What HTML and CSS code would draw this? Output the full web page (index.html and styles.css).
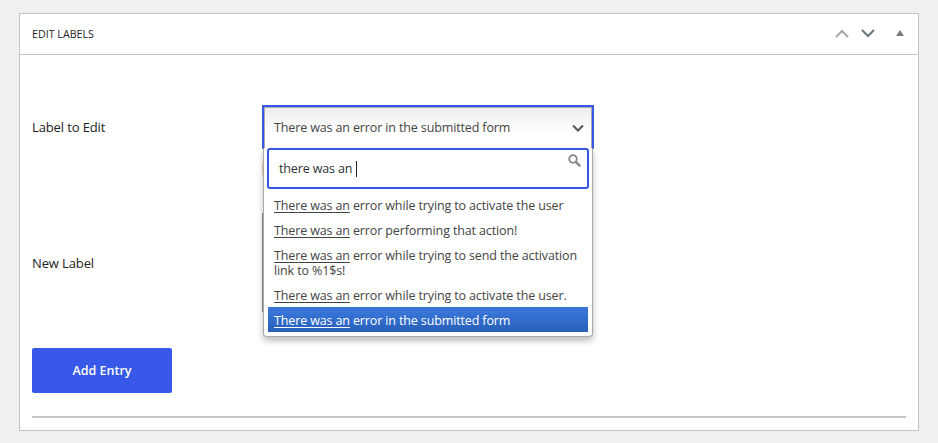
FILE: index.html
```html
<!DOCTYPE html>
<html lang="en">
<head>
<meta charset="utf-8">
<title>Edit Labels</title>
<link rel="stylesheet" href="styles.css">
</head>
<body>
<section class="card">
  <header class="card-head">
    <h2 class="card-title">EDIT LABELS</h2>
    <div class="card-actions">
      <svg class="ico up" width="14" height="9" viewBox="0 0 14 9"><path d="M1 8 7 2l6 6" fill="none" stroke="currentColor" stroke-width="2"/></svg>
      <svg class="ico down" width="14" height="9" viewBox="0 0 14 9"><path d="M1 1l6 6 6-6" fill="none" stroke="currentColor" stroke-width="2"/></svg>
      <svg class="ico tri" width="8" height="6" viewBox="0 0 8 6"><path d="M4 0 8 6H0z" fill="currentColor"/></svg>
    </div>
  </header>
  <div class="card-body">
    <div class="row row-select">
      <div class="label">Label to Edit</div>
      <div class="control">
        <div class="select">
          <div class="select-inner">
            <span>There was an error in the submitted form</span>
            <svg class="chev" width="12" height="8" viewBox="0 0 12 8"><path d="M1 1.5 6 6.5l5-5" fill="none" stroke="currentColor" stroke-width="2"/></svg>
          </div>
        </div>
        <span class="tick"></span>
        <div class="drop">
          <div class="search">
            <span class="typed">there was an</span><span class="caret"></span>
            <svg class="mag" width="13" height="13" viewBox="0 0 13 13"><circle cx="5" cy="5" r="3.8" fill="none" stroke="currentColor" stroke-width="1.8"/><path d="m7.8 7.8 4.4 4.4" stroke="currentColor" stroke-width="2.4"/></svg>
          </div>
          <ul class="results">
            <li><u>There was an</u> error while trying to activate the user</li>
            <li><u>There was an</u> error performing that action!</li>
            <li><u>There was an</u> error while trying to send the activation link to %1$s!</li>
            <li><u>There was an</u> error while trying to activate the user.</li>
            <li class="active"><u>There was an</u> error in the submitted form</li>
          </ul>
        </div>
      </div>
    </div>
    <div class="row row-text">
      <div class="label">New Label</div>
      <div class="box"></div>
    </div>
    <button class="add" type="button">Add Entry</button>
    <hr class="rule">
  </div>
</section>
</body>
</html>
```
FILE: styles.css
```css
html, body { margin: 0; padding: 0; }
body {
  background: #f0f0f1;
  padding: 13px 19px 12px;
  font-family: "Open Sans", "Noto Sans", sans-serif;
  font-size: 12.5px;
  letter-spacing: -0.13px;
  color: #2c3338;
  height: 443px;
  box-sizing: border-box;
  overflow: hidden;
}
.card {
  width: 900px;
  height: 418px;
  box-sizing: border-box;
  background: #fff;
  border: 1px solid #c3c4c7;
}
.card-head {
  height: 41px;
  box-sizing: border-box;
  border-bottom: 1px solid #c3c4c7;
  display: flex;
  align-items: center;
  justify-content: space-between;
  padding: 0 14px 0 12px;
}
.card-title { margin: 0; font-size: 10.7px; font-weight: 400; letter-spacing: 0; color: #1d2327; }
.card-actions { display: flex; align-items: center; gap: 12px; margin-top: -2px; }
.ico.up { color: #a7aaad; }
.ico.down { color: #6a7478; }
.ico.tri { color: #787c82; margin-left: 9px; margin-top: -1px; }
.card-body { padding: 50px 12px 0; }
.row { display: grid; grid-template-columns: 230px 332px; }
.label { color: #1d2327; font-size: 13px; letter-spacing: -0.12px; }
.row-select { height: 108px; }
.row-select .label { padding-top: 13px; }
.control { position: relative; }
.select {
  height: 44px;
  box-sizing: border-box;
  border: 2px solid #3858e9;
  border-bottom: 0;
}
.select-inner {
  height: 100%;
  box-sizing: border-box;
  border: 1px solid #aaa;
  border-bottom: 0;
  background: linear-gradient(#eeeeee, #ffffff 60%);
  display: flex;
  align-items: center;
  justify-content: space-between;
  padding: 0 7px 2px 9px;
  color: #444;
}
.chev { color: #50575e; }
.tick {
  position: absolute;
  left: 0;
  top: 58px;
  width: 2px;
  height: 12px;
  background: #f3cfa8;
}
.drop {
  position: absolute;
  z-index: 2;
  left: 1px;
  top: 43px;
  width: 330px;
  box-sizing: border-box;
  background: #fff;
  border: 1px solid #aaa;
  border-top: 0;
  border-radius: 0 0 4px 4px;
  box-shadow: 0 4px 6px rgba(0, 0, 0, .25);
  padding: 0 3px 4px;
}
.search {
  position: relative;
  height: 41px;
  box-sizing: border-box;
  border: 2px solid #3858e9;
  border-radius: 3px;
  display: flex;
  align-items: center;
  padding-left: 10px;
  color: #2c3338;
}
.caret { display: inline-block; width: 1px; height: 16px; background: #222; margin-left: 4px; }
.mag { position: absolute; right: 6px; top: 4px; color: #888; }
.results { list-style: none; margin: 3px 1px 0; padding: 0; }
.results li { padding: 6px 6px 4px; line-height: 15px; color: #444; }
.results u { text-underline-offset: 2px; }
.results .active { background: linear-gradient(#3875d7 20%, #2a62bc 90%); color: #fff; }
.row-text { height: 135px; }
.row-text .label { padding-top: 0; margin-top: 41px; }
.box { border-left: 2px solid #8c8f94; height: 99px; }
.add {
  display: block;
  width: 140px;
  height: 45px;
  background: #3858e9;
  border: 0;
  border-radius: 2px;
  color: #fff;
  font: 600 12.5px "Open Sans", "Noto Sans", sans-serif;
  letter-spacing: 0;
}
.rule { margin: 23px 0 0; border: 0; height: 2px; background: #c3c4c7; }
```
